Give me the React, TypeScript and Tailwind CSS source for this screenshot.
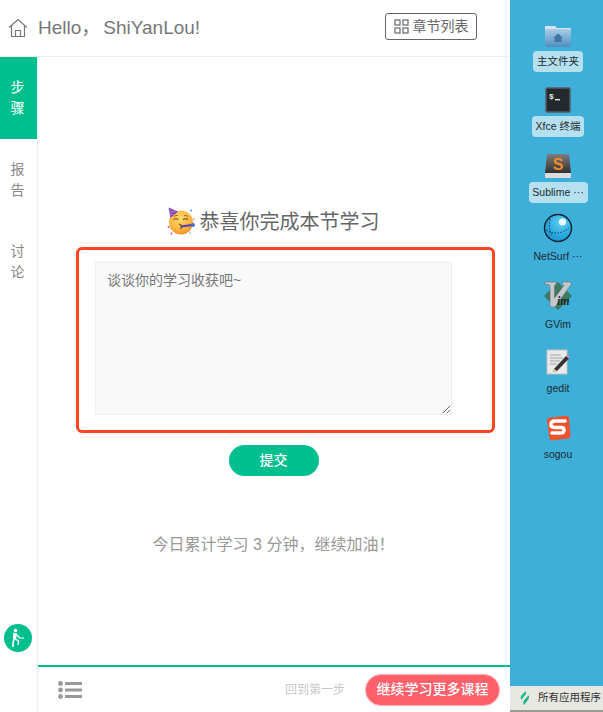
import { useState } from "react";

const font = "font-['Liberation_Sans','Noto_Sans_CJK_SC',sans-serif]";

function HomeIcon() {
  return (
    <svg width="20" height="20" viewBox="0 0 20 20" fill="none" stroke="#777" strokeWidth="1.2">
      <path d="M1 9.5 L10 1.5 L19 9.5" />
      <path d="M3.5 8 V18.5 H16.5 V8" />
      <path d="M7.5 18.5 V12.5 H12.5 V18.5" />
    </svg>
  );
}

function GridIcon() {
  return (
    <svg width="15" height="15" viewBox="0 0 15 15" fill="none" stroke="#666" strokeWidth="1.2">
      <rect x="1" y="1" width="5" height="5" />
      <rect x="9" y="1" width="5" height="5" />
      <rect x="1" y="9" width="5" height="5" />
      <rect x="9" y="9" width="5" height="5" />
    </svg>
  );
}

function PartyEmoji() {
  return (
    <svg width="29" height="29" viewBox="0 0 29 29" className="shrink-0">
      <defs>
        <radialGradient id="face" cx="0.45" cy="0.35" r="0.7">
          <stop offset="0" stopColor="#ffdc6e" />
          <stop offset="0.7" stopColor="#fbb03b" />
          <stop offset="1" stopColor="#f0842c" />
        </radialGradient>
      </defs>
      <circle cx="14" cy="15.5" r="12" fill="url(#face)" />
      <path d="M1.5 0.5 L11 4.5 L3.5 11 Z" fill="#7a4fc0" />
      <path d="M3 5 L8 4 M3 8 L6 7" stroke="#e86aa6" strokeWidth="1" />
      <path d="M6.5 12.5 Q9 11 11.5 12.5 M16 12.5 Q18.5 11 21 12.5" stroke="#7a4516" strokeWidth="1.2" fill="none" />
      <path d="M7 9.5 Q9 8 11 8.5 M17 8.5 Q19 8 21 9.5" stroke="#a8621d" strokeWidth="0.9" fill="none" />
      <path d="M12 17 Q15 18 14 19.5 Q16 20.5 13 22" stroke="#7a4516" strokeWidth="1.1" fill="none" />
      <path d="M14 19.5 L25 18" stroke="#4a3fb5" strokeWidth="2.2" />
      <circle cx="26" cy="18" r="2" fill="#4f6fd0" />
      <circle cx="24" cy="3.5" r="1" fill="#4f8fe0" />
      <circle cx="1.5" cy="20" r="0.9" fill="#e0457a" />
      <circle cx="4.5" cy="26.5" r="0.9" fill="#e0457a" />
      <circle cx="23" cy="26" r="0.8" fill="#4fb0a0" />
      <circle cx="27" cy="12" r="0.7" fill="#e0457a" />
    </svg>
  );
}

function ClimberIcon() {
  return (
    <div className="flex h-[28px] w-[28px] items-center justify-center rounded-full bg-[#00bf8f]">
      <svg width="16" height="20" viewBox="0 0 16 20" fill="none" stroke="#fff">
        <circle cx="5.5" cy="2.5" r="1.8" fill="#fff" stroke="none" />
        <path d="M5 5 L4.5 11" strokeWidth="3.4" />
        <path d="M6 6 L9.5 10 L14 10" strokeWidth="1.2" />
        <path d="M4 11 L3 15 L3 19" strokeWidth="1.6" />
        <path d="M5 11 L8.5 13 L8 17" strokeWidth="1.4" />
      </svg>
    </div>
  );
}

function ListIcon() {
  return (
    <svg width="24" height="18" viewBox="0 0 24 18" fill="#999">
      <circle cx="2.5" cy="2.5" r="2.4" />
      <circle cx="2.5" cy="9" r="2.4" />
      <circle cx="2.5" cy="15.5" r="2.4" />
      <rect x="7" y="1" width="17" height="3" />
      <rect x="7" y="7.5" width="17" height="3" />
      <rect x="7" y="14" width="17" height="3" />
    </svg>
  );
}

function FolderIcon() {
  return (
    <svg width="28" height="24" viewBox="0 0 28 24">
      <defs>
        <linearGradient id="folder" x1="0" y1="0" x2="0" y2="1">
          <stop offset="0" stopColor="#a9cde6" />
          <stop offset="1" stopColor="#4f8fc0" />
        </linearGradient>
      </defs>
      <path d="M1 2 H11 L13 4 H27 V7 H1 Z" fill="#d8e4ec" />
      <rect x="1" y="5" width="26" height="18" rx="1.5" fill="url(#folder)" />
      <path d="M14 9.5 L19 14 H17.5 V18 H10.5 V14 H9 Z" fill="#3f78a8" />
    </svg>
  );
}

function TerminalIcon() {
  return (
    <svg width="26" height="26" viewBox="0 0 26 26">
      <rect x="1" y="1" width="24" height="24" rx="1" fill="#23292d" stroke="#555b60" strokeWidth="1.5" />
      <text x="4" y="12" fontSize="8" fontWeight="700" fill="#e6e6e6" fontFamily="Liberation Mono">$</text>
      <rect x="10" y="12" width="5" height="1.4" fill="#e6e6e6" />
    </svg>
  );
}

function SublimeIcon() {
  return (
    <svg width="28" height="26" viewBox="0 0 28 26">
      <defs>
        <linearGradient id="subl" x1="0" y1="0" x2="0" y2="1">
          <stop offset="0" stopColor="#7d7d7d" />
          <stop offset="1" stopColor="#33302e" />
        </linearGradient>
      </defs>
      <path d="M3 1 H25 L27 20 H1 Z" fill="url(#subl)" />
      <path d="M1 20 H27 V24 Q27 25 26 25 H2 Q1 25 1 24 Z" fill="#dcdcdc" />
      <text x="14" y="17" textAnchor="middle" fontSize="16" fontWeight="700" fill="#f08a24" fontFamily="Liberation Sans">S</text>
    </svg>
  );
}

function GlobeIcon() {
  return (
    <svg width="30" height="30" viewBox="0 0 30 30">
      <defs>
        <radialGradient id="globe" cx="0.6" cy="0.3" r="0.8">
          <stop offset="0" stopColor="#5fd0f5" />
          <stop offset="1" stopColor="#0a8ed0" />
        </radialGradient>
      </defs>
      <circle cx="15" cy="15" r="13.5" fill="url(#globe)" stroke="#10202c" strokeWidth="1.4" />
      <path d="M7 6 Q5 15 9 22 M3 17 Q14 24 26 15" stroke="#123" strokeWidth="0.8" strokeDasharray="1.6 1.4" fill="none" />
      <circle cx="19.5" cy="9" r="3.6" fill="#f2fbff" />
    </svg>
  );
}

function VimIcon() {
  return (
    <svg width="30" height="30" viewBox="0 0 30 30">
      <path d="M15 1 L29 15 L15 29 L1 15 Z" fill="#3d7a5f" />
      <path d="M2 1 H13 V3.5 L11.5 4.5 V17 L21 4.5 L19.5 3.5 V1 H28 V3.5 L12 26 H8 L7 24.5 V4.5 L5 3.5 H2 Z" fill="#c5c8ca" stroke="#6a6f72" strokeWidth="0.6" />
      <text x="14" y="24" fontSize="12" fontWeight="700" fontStyle="italic" fill="#1e2a26" fontFamily="Liberation Serif">im</text>
    </svg>
  );
}

function GeditIcon() {
  return (
    <svg width="24" height="26" viewBox="0 0 24 26">
      <rect x="1" y="1" width="20" height="24" fill="#e9e9e9" stroke="#c2c2c2" />
      <path d="M4 6 H15 M4 9 H17 M4 12 H14 M4 15 H11" stroke="#9a9a9a" strokeWidth="0.9" />
      <path d="M8 20 L20 7 L23 9.5 L11 22 L7.5 23 Z" fill="#333" />
      <path d="M20 7 L21.5 5.5 L24 8 L23 9.5 Z" fill="#dc8aa5" />
      <path d="M7.5 23 L8 20 L11 22 Z" fill="#efe08c" />
    </svg>
  );
}

function SogouIcon() {
  return (
    <svg width="26" height="26" viewBox="0 0 26 26">
      <path d="M2 5 Q2 3 4 2.7 L21 0.8 Q23.5 0.6 24 3 L25.5 21 Q25.5 23 23.5 23.3 L7 25.5 Q5 25.5 4.5 23.5 Z" fill="#f0512d" />
      <path d="M20 6 H10 Q6 6 6 9.5 Q6 12.5 10 12.5 H16 Q19 12.5 19 15 Q19 18 16 18 H7" stroke="#fff" strokeWidth="3.6" fill="none" strokeLinecap="round" />
    </svg>
  );
}

function DesktopItem({
  icon,
  label,
  pill,
  width,
  height,
}: {
  icon: React.ReactNode;
  label: string;
  pill?: boolean;
  width?: string;
  height: string;
}) {
  return (
    <div className={`flex flex-col items-center justify-end ${height}`}>
      <div className="flex h-[30px] items-end justify-center">{icon}</div>
      <div
        className={
          pill
            ? `mt-[3px] flex h-[21px] items-center justify-center rounded-[4px] bg-[#b5e0ef] text-[10.5px] text-[#1f2a30] ${width}`
            : "mt-[3px] flex h-[21px] items-center justify-center text-[10.5px] text-[#1f2a30]"
        }
      >
        {label}
      </div>
    </div>
  );
}

export default function App() {
  const [note, setNote] = useState("");

  return (
    <div className={`flex h-[712px] w-[603px] overflow-hidden bg-white ${font}`}>
      {/* Course panel */}
      <div className="flex w-[510px] flex-col">
        <header className="flex h-[57px] shrink-0 items-center border-b border-[#eeeeee] pl-[8px] pr-[33px]">
          <HomeIcon />
          <span className="ml-[10px] text-[19px] text-[#777777]">
            Hello，<span className="ml-[3px]">ShiYanLou!</span>
          </span>
          <button className="ml-auto mt-[-4px] flex h-[27px] w-[92px] items-center justify-center gap-[4px] rounded-[3px] border border-[#666666] text-[14px] text-[#666666]">
            <GridIcon />
            章节列表
          </button>
        </header>

        <div className="flex min-h-0 flex-1">
          {/* Sidebar */}
          <aside className="flex w-[38px] shrink-0 flex-col border-r border-[#eeeeee]">
            <div className="flex h-[82px] w-[37px] flex-col items-center justify-center bg-[#00bf8f] pr-[2px] text-[14px] leading-[21px] text-white">
              <span>步</span>
              <span>骤</span>
            </div>
            <div className="flex h-[82px] flex-col items-center justify-center pr-[2px] text-[14px] leading-[21px] text-[#888888]">
              <span>报</span>
              <span>告</span>
            </div>
            <div className="flex h-[82px] flex-col items-center justify-center pr-[2px] text-[14px] leading-[21px] text-[#888888]">
              <span>讨</span>
              <span>论</span>
            </div>
            <div className="mt-auto mb-[60px] flex pl-[4px]">
              <ClimberIcon />
            </div>
          </aside>

          <div className="flex min-w-0 flex-1 flex-col">
            <main className="flex flex-1 flex-col items-center pt-[148px]">
              <div className="flex h-[33px] items-center gap-[4px] pr-[2px] text-[20px] text-[#666666]">
                <PartyEmoji />
                恭喜你完成本节学习
              </div>
              <div className="mt-[9px] ml-[23px] h-[186px] w-[419px] rounded-[6px] border-[3px] border-[#ff4422] pl-[16px] pt-[12px]">
                <textarea
                  value={note}
                  onChange={(e) => setNote(e.target.value)}
                  placeholder="谈谈你的学习收获吧~"
                  className="block h-[153px] w-[357px] resize border border-[#eeeeee] bg-[#f9f9f9] px-[11px] py-[7px] text-[14px] leading-[20px] text-[#666666] outline-none placeholder:text-[#777777]"
                />
              </div>
              <button className="mt-[12px] ml-[-1px] h-[31px] w-[90px] rounded-full bg-[#00bf8f] text-[14px] font-medium text-white">
                提交
              </button>
              <p className="mt-[57px] ml-[-1px] text-[16px] leading-[24px] text-[#999999]">
                今日累计学习 3 分钟，继续加油！
              </p>
            </main>

            {/* Footer */}
            <footer className="flex h-[47px] shrink-0 items-center border-t-2 border-[#00bf8f] pl-[20px] pr-[10px]">
              <ListIcon />
              <span className="ml-auto text-[12px] text-[#c8c8c8]">回到第一步</span>
              <button className="ml-[20px] h-[32px] w-[135px] rounded-full border border-[#ffb0b4] bg-[#ff6069] text-[14px] font-medium text-white">
                继续学习更多课程
              </button>
            </footer>
          </div>
        </div>
      </div>

      {/* Remote desktop */}
      <div className="flex w-[93px] flex-col bg-[#3dafd9]">
        <div className="flex flex-1 flex-col pl-[3px] pt-[14px]">
          <DesktopItem icon={<FolderIcon />} label="主文件夹" pill width="w-[50px]" height="h-[58px]" />
          <DesktopItem icon={<TerminalIcon />} label="Xfce 终端" pill width="w-[52px]" height="h-[65px]" />
          <DesktopItem icon={<SublimeIcon />} label="Sublime ···" pill width="w-[59px]" height="h-[66px]" />
          <DesktopItem icon={<GlobeIcon />} label="NetSurf ···" height="h-[64px]" />
          <DesktopItem icon={<VimIcon />} label="GVim" height="h-[68px]" />
          <DesktopItem icon={<GeditIcon />} label="gedit" height="h-[64px]" />
          <DesktopItem icon={<SogouIcon />} label="sogou" height="h-[66px]" />
        </div>
        <div className="flex h-[26px] items-center gap-[6px] border-b-2 border-[#9a9a94] bg-[#e8e8e2] pl-[8px] text-[10.5px] text-[#333333] whitespace-nowrap">
          <svg width="14" height="16" viewBox="0 0 14 18" fill="#12b886" className="shrink-0">
            <path d="M8 1 Q9 4 6 7 L3 11 Q1 8 3.5 5.5 Z" />
            <path d="M11 6 Q12.5 9 9.5 12 L6 17 Q4 14 6.5 11 Z" />
          </svg>
          所有应用程序
        </div>
      </div>
    </div>
  );
}
